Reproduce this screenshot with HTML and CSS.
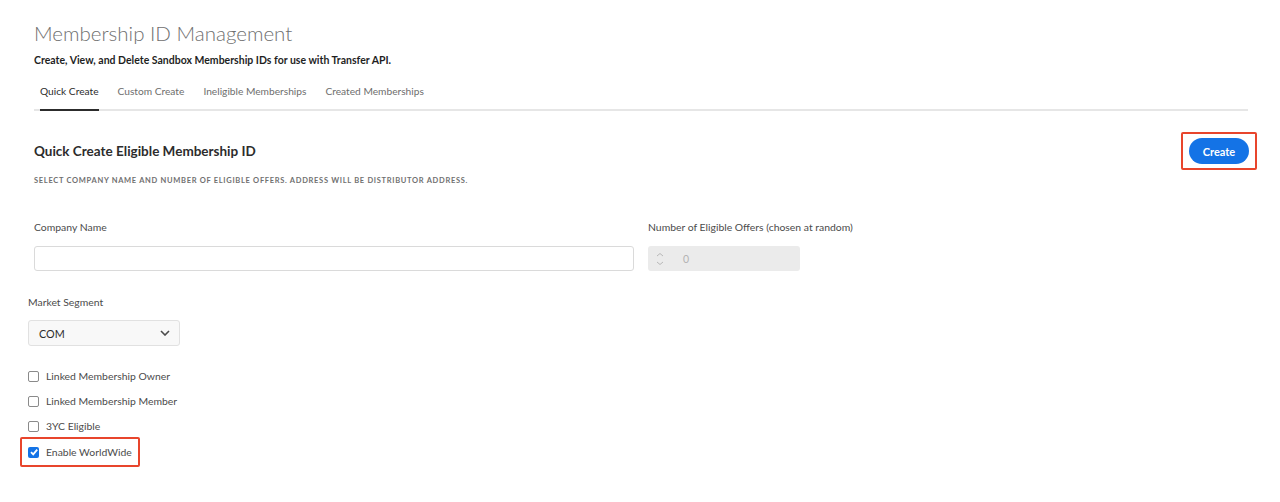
FILE: index.html
```html
<!DOCTYPE html>
<html lang="en">
<head>
    <meta charset="UTF-8">
    <meta name="viewport" content="width=device-width, initial-scale=1.0">
    <title>Membership ID Management</title>
    <link rel="stylesheet" href="styles.css">
</head>
<body>
    <div class="page">
        <h1 class="title">Membership ID Management</h1>
        <p class="subtitle">Create, View, and Delete Sandbox Membership IDs for use with Transfer API.</p>

        <div class="tabs">
            <span class="tab active">Quick Create</span>
            <span class="tab">Custom Create</span>
            <span class="tab">Ineligible Memberships</span>
            <span class="tab">Created Memberships</span>
        </div>

        <div class="section-head">
            <div>
                <h2 class="section-title">Quick Create Eligible Membership ID</h2>
                <p class="hint">Select company name and number of eligible offers. Address will be distributor address.</p>
            </div>
            <div class="highlight btn-wrap">
                <button class="btn-create">Create</button>
            </div>
        </div>

        <div class="fields">
            <div class="field company">
                <label class="label">Company Name</label>
                <input class="text-input" type="text">
            </div>
            <div class="field offers">
                <label class="label">Number of Eligible Offers (chosen at random)</label>
                <div class="number-input">
                    <span class="stepper">
                        <svg width="8" height="14" viewBox="0 0 8 14">
                            <path d="M1 4 L4 1.5 L7 4" fill="none" stroke="#b8b8b8" stroke-width="1"/>
                            <path d="M1 10 L4 12.5 L7 10" fill="none" stroke="#b8b8b8" stroke-width="1"/>
                        </svg>
                    </span>
                    <span class="number-value">0</span>
                </div>
            </div>
        </div>
    </div>

    <div class="lower">
        <label class="label">Market Segment</label>
        <div class="select">
            <span>COM</span>
            <svg width="10" height="6" viewBox="0 0 10 6">
                <path d="M1 1 L5 5 L9 1" fill="none" stroke="#4b4b4b" stroke-width="1.6"/>
            </svg>
        </div>

        <div class="checks">
            <div class="check"><span class="box"></span>Linked Membership Owner</div>
            <div class="check"><span class="box"></span>Linked Membership Member</div>
            <div class="check"><span class="box"></span>3YC Eligible</div>
            <div class="check highlight checked-row">
                <span class="box checked">
                    <svg width="10" height="10" viewBox="0 0 10 10">
                        <path d="M2 5.2 L4.2 7.4 L8.2 2.6" fill="none" stroke="#fff" stroke-width="1.8"/>
                    </svg>
                </span>Enable WorldWide
            </div>
        </div>
    </div>
</body>
</html>
```

FILE: styles.css
```css
body {
    margin: 0;
    background: #fff;
    font-family: 'Lato', 'Open Sans', sans-serif;
    color: #2c2c2c;
}

.page {
    width: 1214px;
    padding: 18px 0 0 34px;
}

.title {
    margin: 0;
    font-size: 20.5px;
    font-weight: 300;
    line-height: 30px;
    color: #6f6f6f;
}

.subtitle {
    margin: 5px 0 0;
    font-size: 10.5px;
    font-weight: 700;
    line-height: 14px;
    color: #1f1f1f;
}

.tabs {
    display: flex;
    margin-top: 13px;
    padding-left: 6px;
    gap: 19px;
    border-bottom: 2px solid #e6e6e6;
}

.tab {
    margin-bottom: -2px;
    padding: 4px 0 11px;
    font-size: 10.2px;
    line-height: 14px;
    color: #6e6e6e;
    border-bottom: 2px solid transparent;
}

.tab.active {
    color: #2c2c2c;
    border-bottom-color: #2c2c2c;
}

.section-head {
    display: flex;
    justify-content: space-between;
    align-items: flex-start;
    margin-top: 21px;
}

.section-title {
    margin: 10px 0 0;
    font-size: 13.5px;
    font-weight: 700;
    line-height: 18px;
    color: #2c2c2c;
}

.hint {
    margin: 16px 0 0;
    font-size: 7.5px;
    font-weight: 700;
    letter-spacing: 0.7px;
    text-transform: uppercase;
    color: #707070;
}

.highlight {
    border: 2px solid #e8452c;
    border-radius: 2px;
}

.btn-wrap {
    margin-right: -9px;
    padding: 4px 6px;
}

.btn-create {
    width: 60px;
    height: 26px;
    border: none;
    border-radius: 13px;
    background: #1473e6;
    color: #fff;
    font-family: inherit;
    font-size: 11px;
    font-weight: 700;
    cursor: pointer;
}

.fields {
    display: flex;
    gap: 14px;
    margin-top: 35px;
}

.label {
    display: block;
    font-size: 10.4px;
    line-height: 14px;
    color: #4b4b4b;
}

.field .label {
    margin-bottom: 12px;
}

.text-input {
    box-sizing: border-box;
    width: 600px;
    height: 25px;
    border: 1px solid #dadada;
    border-radius: 3px;
    outline: none;
}

.number-input {
    box-sizing: border-box;
    width: 152px;
    height: 25px;
    display: flex;
    align-items: center;
    gap: 19px;
    padding-left: 8px;
    border-radius: 3px;
    background: #ebebeb;
}

.stepper {
    display: flex;
}

.number-value {
    font-size: 10.5px;
    color: #b3b3b3;
}

.lower {
    padding: 24px 0 0 28px;
}

.lower > .label {
    margin-bottom: 11px;
}

.select {
    box-sizing: border-box;
    width: 152px;
    height: 26px;
    display: flex;
    align-items: center;
    justify-content: space-between;
    padding: 0 9px 0 10px;
    border: 1px solid #e1e1e1;
    border-radius: 3px;
    background: #f8f8f8;
    font-size: 10.8px;
    color: #2c2c2c;
}

.checks {
    margin-top: 23px;
}

.check {
    display: flex;
    align-items: center;
    height: 14px;
    margin-bottom: 11px;
    font-size: 10.4px;
    color: #4b4b4b;
}

.box {
    box-sizing: border-box;
    width: 11px;
    height: 11px;
    margin-right: 7px;
    border: 1.5px solid #8a8a8a;
    border-radius: 2px;
    display: flex;
    align-items: center;
    justify-content: center;
}

.box.checked {
    border: none;
    background: #1473e6;
}

.checked-row {
    box-sizing: border-box;
    width: 120px;
    height: 30px;
    margin: -7px 0 0 -8px;
    padding-left: 6px;
}
```
